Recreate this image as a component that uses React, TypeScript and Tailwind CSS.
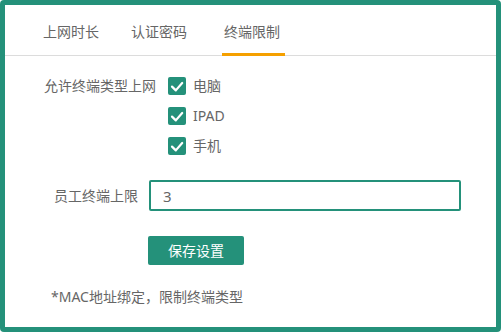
import React from "react";

const font = { fontFamily: '"Noto Sans", "Noto Sans CJK SC", sans-serif' };

function Check({ label }: { label: string }) {
  return (
    <div className="flex h-[30px] items-center">
      <span className="flex h-[18px] w-[18px] items-center justify-center rounded-[2px] bg-[#24917a]">
        <svg width="18" height="18" viewBox="0 0 18 18">
          <path d="M4 9.6 L7.8 13.4 L14.2 6" fill="none" stroke="#fff" strokeWidth="2.2" strokeLinecap="round" strokeLinejoin="round" />
        </svg>
      </span>
      <span className="ml-[7px] text-[14px] leading-[20px] text-[#666]">{label}</span>
    </div>
  );
}

export default function App() {
  return (
    <div style={font} className="h-[332px] w-[501px] overflow-hidden rounded-[4px] border-[5px] border-[#24917a] bg-white">
      <div className="flex h-[51px] border-b border-[#dcdcdc] pl-[38px] text-[14px] text-[#666]">
        <div className="flex h-full items-center pt-[3px]">上网时长</div>
        <div className="ml-[32px] flex h-full items-center pt-[3px]">认证密码</div>
        <div className="relative ml-[37px] flex h-full items-center pt-[3px]">
          终端限制
          <span className="absolute bottom-[-1px] left-[-2px] h-[3px] w-[63px] bg-[#f5a000]" />
        </div>
      </div>
      <div className="pt-[15px]">
        <div className="flex">
          <div className="w-[151px] whitespace-nowrap text-right text-[14px] leading-[30px] text-[#666]">允许终端类型上网</div>
          <div className="ml-[12px] flex flex-col">
            <Check label="电脑" />
            <Check label="IPAD" />
            <Check label="手机" />
          </div>
        </div>
        <div className="mt-[19px] flex items-center">
          <div className="w-[133px] whitespace-nowrap text-right text-[14px] text-[#666]">员工终端上限</div>
          <div className="ml-[11px] flex h-[31px] w-[312px] items-center rounded-[2px] border-2 border-[#24917a] pl-[12px] pt-[1px] text-[15px] text-[#666]">
            3
          </div>
        </div>
        <div className="ml-[143px] mt-[25px] flex h-[29px] w-[96px] items-center justify-center rounded-[2px] bg-[#24917a] text-[14px] text-white">
          保存设置
        </div>
        <div className="ml-[46px] mt-[22px] text-[14px] leading-[20px] text-[#666]">*MAC地址绑定，限制终端类型</div>
      </div>
    </div>
  );
}
